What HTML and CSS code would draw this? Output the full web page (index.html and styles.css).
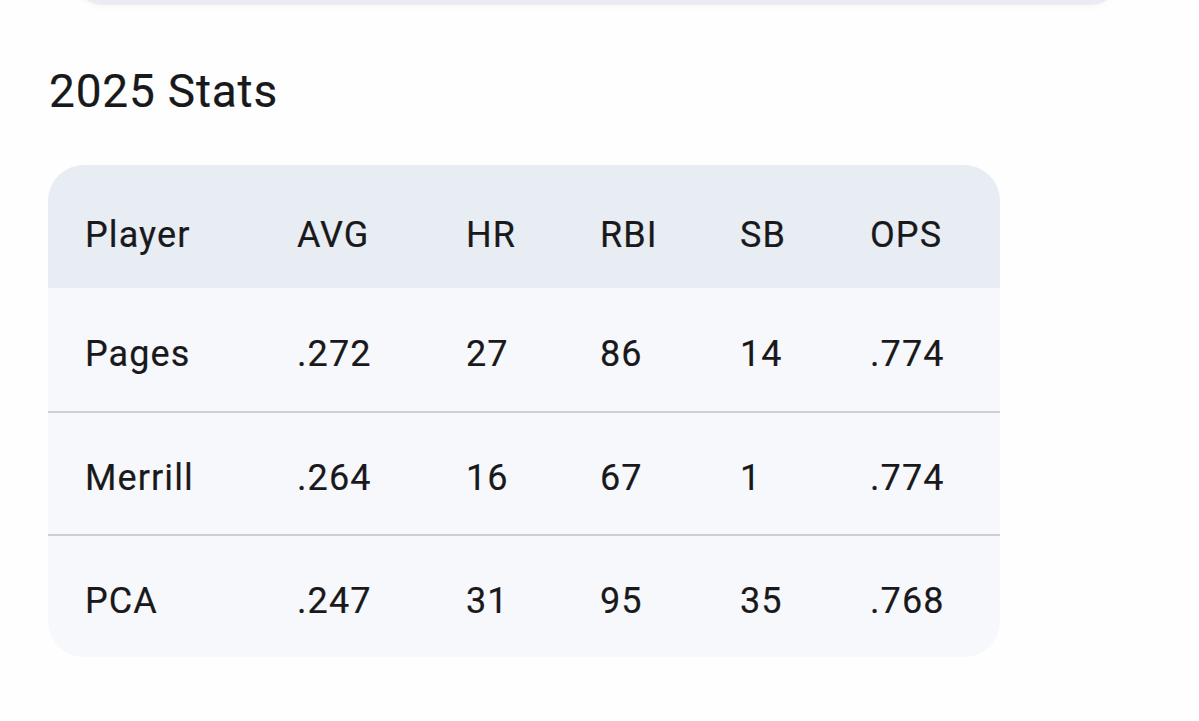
FILE: index.html
```html
<!DOCTYPE html>
<html lang="en">
<head>
<meta charset="utf-8">
<title>2025 Stats</title>
<link rel="stylesheet" href="styles.css">
</head>
<body>
<div class="prev-card"></div>
<main class="content">
  <h2 class="title">2025 Stats</h2>
  <div class="stats">
    <div class="row head">
      <div class="cell">Player</div><div class="cell">AVG</div><div class="cell">HR</div><div class="cell">RBI</div><div class="cell">SB</div><div class="cell">OPS</div>
    </div>
    <div class="row">
      <div class="cell">Pages</div><div class="cell">.272</div><div class="cell">27</div><div class="cell">86</div><div class="cell">14</div><div class="cell">.774</div>
    </div>
    <div class="row">
      <div class="cell">Merrill</div><div class="cell">.264</div><div class="cell">16</div><div class="cell">67</div><div class="cell">1</div><div class="cell">.774</div>
    </div>
    <div class="row">
      <div class="cell">PCA</div><div class="cell">.247</div><div class="cell">31</div><div class="cell">95</div><div class="cell">35</div><div class="cell">.768</div>
    </div>
  </div>
</main>
</body>
</html>
```

FILE: styles.css
```css
* { box-sizing: border-box; }
html, body { margin: 0; padding: 0; }
body {
  background: #fefefe;
  font-family: Roboto, "Noto Sans", sans-serif;
  color: #19191b;
  width: 1199px;
  height: 721px;
  overflow: hidden;
}
.prev-card {
  margin: -60px 79px 0 73px;
  height: 65px;
  background: #ebebf4;
  border-radius: 0 0 30px 30px;
  box-shadow: 0 2px 6px rgba(0,0,0,0.03);
}
.content {
  padding: 0 0 0 48px;
}
.title {
  margin: 59px 0 0 1px;
  font-size: 46px;
  font-weight: 400;
  line-height: 54px;
  letter-spacing: 0.8px;
  -webkit-text-stroke: 0.2px #19191b;
}
.stats {
  margin-top: 47px;
  width: 952px;
  border-radius: 36px;
  overflow: hidden;
  background: #f7f8fc;
}
.row {
  display: grid;
  grid-template-columns: 212px 169px 134px 140px 130px 167px;
  height: 123px;
  align-items: center;
  font-size: 36px;
  letter-spacing: 1.1px;
  -webkit-text-stroke: 0.2px #19191b;
  border-top: 2px solid #cfcfd3;
}
.row .cell { padding: 8px 0 0 37px; }
.row.head {
  background: #e8ecf3;
  border-top: none;
}
.row.head .cell { padding-top: 16px; }
.row.head + .row { border-top: none; }
```
